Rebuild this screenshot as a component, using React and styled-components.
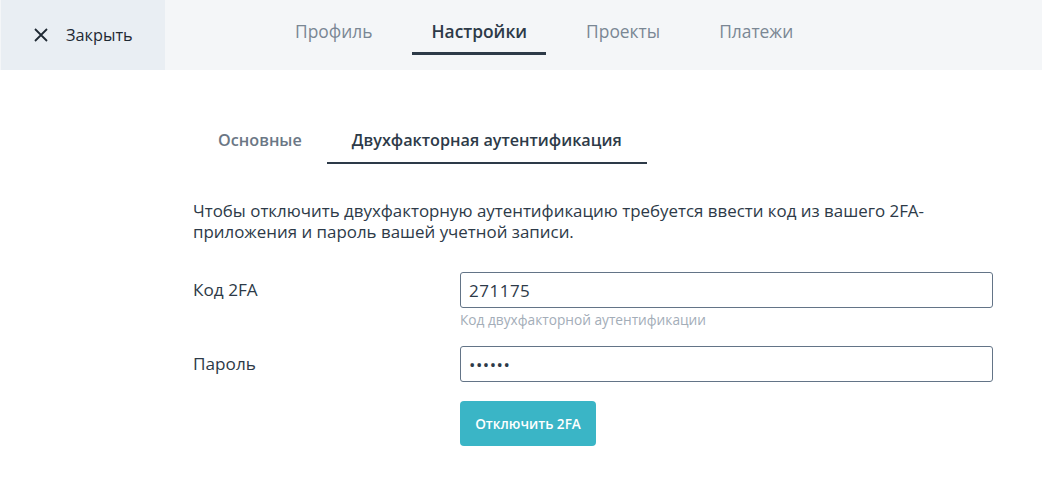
import React, { useState } from "react";
import styled, { createGlobalStyle } from "styled-components";

const GlobalStyle = createGlobalStyle`
  body {
    margin: 0;
    background: #ffffff;
    font-family: "Open Sans", "Noto Sans", sans-serif;
    color: #2d3a48;
  }
`;

const mainTabs = ["Профиль", "Настройки", "Проекты", "Платежи"];
const subTabs = ["Основные", "Двухфакторная аутентификация"];

const Header = styled.header`
  height: 70px;
  display: flex;
  background: #f4f6f8;
`;

const CloseButton = styled.button`
  width: 164px;
  margin-left: 1px;
  border: none;
  background: #e9eef3;
  display: flex;
  align-items: center;
  gap: 17px;
  padding: 0 0 0 32px;
  font-family: inherit;
  font-size: 16.3px;
  color: #1f2933;
  cursor: pointer;
`;

const MainTabs = styled.nav`
  display: flex;
  gap: 21px;
  margin-left: 111px;
`;

const MainTab = styled.div`
  padding: 0 19px;
  display: flex;
  align-items: center;
  box-sizing: border-box;
  height: 45px;
  margin-top: 10px;
  font-size: 17.4px;
  font-weight: ${(p) => (p.active ? 600 : 400)};
  color: ${(p) => (p.active ? "#2d3a48" : "#7a8794")};
  border-bottom: 3px solid ${(p) => (p.active ? "#2d3a48" : "transparent")};
  cursor: pointer;
`;

const Content = styled.main`
  width: 800px;
  margin-left: 193px;
  padding-top: 59px;
`;

const SubTabs = styled.div`
  display: flex;
`;

const SubTab = styled.div`
  padding: 0 25px 11px;
  font-size: 16.2px;
  font-weight: 600;
  line-height: 22px;
  color: ${(p) => (p.active ? "#2d3a48" : "#6b7785")};
  border-bottom: 2px solid ${(p) => (p.active ? "#2d3a48" : "transparent")};
  cursor: pointer;
`;

const Intro = styled.p`
  margin: 36px 0 0;
  font-size: 16.9px;
  line-height: 21px;
  color: #2d3a48;
`;

const Form = styled.form`
  margin-top: 30px;
  display: grid;
  grid-template-columns: 267px 1fr;
`;

const Label = styled.label`
  font-size: 17.2px;
  line-height: 36px;
  color: #2d3a48;
`;

const Field = styled.div`
  display: flex;
  flex-direction: column;
  margin-bottom: ${(p) => p.gap || 0}px;
`;

const Input = styled.input`
  height: 36px;
  box-sizing: border-box;
  border: 1px solid #637487;
  border-radius: 3px;
  padding: 0 8px;
  font-family: inherit;
  font-size: 17px;
  letter-spacing: 0.5px;
  color: #2d3a48;
  outline: none;
`;

const Hint = styled.span`
  font-size: 13.7px;
  color: #a3adb8;
  margin-top: 3px;
  line-height: 18px;
`;

const Submit = styled.button`
  width: 136px;
  height: 45px;
  border: none;
  border-radius: 4px;
  background: #3ab5c6;
  color: #ffffff;
  font-family: inherit;
  font-size: 13.6px;
  font-weight: 600;
  cursor: pointer;
`;

const CloseIcon = () => (
  <svg width="16" height="16" viewBox="0 0 16 16" fill="none">
    <path d="M2 2L14 14M14 2L2 14" stroke="#1f2933" strokeWidth="1.8" />
  </svg>
);

const App = () => {
  const [tab, setTab] = useState("Настройки");
  const [sub, setSub] = useState("Двухфакторная аутентификация");
  const [code, setCode] = useState("271175");
  const [password, setPassword] = useState("secret");

  return (
    <>
      <GlobalStyle />
      <Header>
        <CloseButton>
          <CloseIcon />
          Закрыть
        </CloseButton>
        <MainTabs>
          {mainTabs.map((t) => (
            <MainTab key={t} active={t === tab} onClick={() => setTab(t)}>
              {t}
            </MainTab>
          ))}
        </MainTabs>
      </Header>
      <Content>
        <SubTabs>
          {subTabs.map((t) => (
            <SubTab key={t} active={t === sub} onClick={() => setSub(t)}>
              {t}
            </SubTab>
          ))}
        </SubTabs>
        <Intro>
          Чтобы отключить двухфакторную аутентификацию требуется ввести код из вашего 2FA-приложения и пароль вашей учетной записи.
        </Intro>
        <Form onSubmit={(e) => e.preventDefault()}>
          <Label>Код 2FA</Label>
          <Field gap={17}>
            <Input value={code} onChange={(e) => setCode(e.target.value)} />
            <Hint>Код двухфакторной аутентификации</Hint>
          </Field>
          <Label>Пароль</Label>
          <Field gap={19}>
            <Input
              type="password"
              value={password}
              onChange={(e) => setPassword(e.target.value)}
            />
          </Field>
          <div />
          <div>
            <Submit type="submit">Отключить 2FA</Submit>
          </div>
        </Form>
      </Content>
    </>
  );
};

export default App;
